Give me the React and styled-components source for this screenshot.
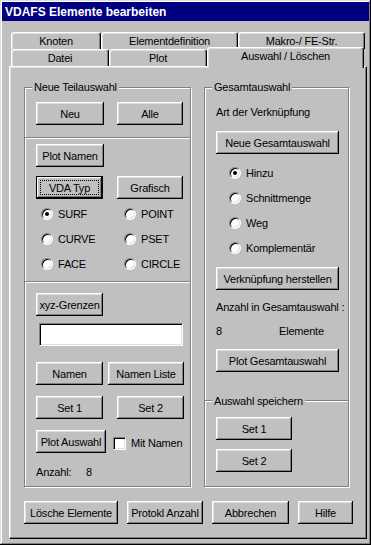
import React from "react";
import styled, { createGlobalStyle } from "styled-components";

const Global = createGlobalStyle`
  html, body {
    margin: 0;
    padding: 0;
    background: #c0c0c0;
  }
`;

const Window = styled.div`
  box-sizing: border-box;
  width: 371px;
  height: 545px;
  padding: 2px;
  background: #c0c0c0;
  box-shadow: inset -1px -1px #000, inset 1px 1px #dfdfdf,
    inset -2px -2px #808080, inset 2px 2px #fff;
  display: flex;
  flex-direction: column;
  font-family: "Liberation Sans", Arial, sans-serif;
  font-size: 11px;
  letter-spacing: -0.2px;
  color: #000;
`;

const TitleBar = styled.div`
  height: 19px;
  background: #000080;
  color: #fff;
  font-size: 12px;
  font-weight: bold;
  letter-spacing: 0;
  display: flex;
  align-items: center;
  padding-left: 3px;
`;

const Body = styled.div`
  flex: 1;
  display: flex;
  flex-direction: column;
  padding: 11px 2px 4px 7px;
`;

const TabRow = styled.div`
  display: flex;
  align-items: flex-start;
  height: 17px;
  padding-left: 2px;
`;

const Tab = styled.div`
  box-sizing: border-box;
  width: ${(p) => p.$w}px;
  height: ${(p) => (p.$active ? 21 : 17)}px;
  margin-top: ${(p) => (p.$active ? -2 : 0)}px;
  padding-bottom: ${(p) => (p.$active ? 4 : 0)}px;
  background: #c0c0c0;
  border-top: 1px solid #fff;
  border-left: 1px solid #fff;
  border-right: 1px solid #000;
  border-radius: 3px 3px 0 0;
  box-shadow: inset -1px 0 #808080, inset 1px 1px #dfdfdf;
  display: flex;
  align-items: center;
  justify-content: center;
  white-space: nowrap;
  position: ${(p) => (p.$active ? "relative" : "static")};
  z-index: ${(p) => (p.$active ? 2 : "auto")};
`;

const Panel = styled.div`
  box-sizing: border-box;
  flex: 1;
  border-top: 1px solid #fff;
  border-left: 1px solid #fff;
  border-right: 1px solid #000;
  border-bottom: 1px solid #000;
  box-shadow: inset -1px -1px #808080, inset 1px 1px #dfdfdf;
  padding: 20px 0 0 14px;
  display: flex;
  flex-direction: column;
`;

const Columns = styled.div`
  display: flex;
  gap: 13px;
`;

const GroupBox = styled.div`
  box-sizing: border-box;
  width: ${(p) => p.$w}px;
  height: 400px;
  border: 1px solid #808080;
  box-shadow: inset 1px 1px #fff, 1px 1px #fff;
  display: flex;
  flex-direction: column;
`;

const Section = styled.div`
  display: flex;
  flex-direction: column;
  align-items: flex-start;
  padding: 0 0 ${(p) => p.$pb || 0}px 11px;
`;

const Divider = styled.div`
  height: 0;
  border-top: 1px solid #808080;
  border-bottom: 1px solid #fff;
  margin-right: ${(p) => p.$mr || 0}px;
`;

const Caption = styled.div`
  margin: -7px 0 0 -4px;
  padding: 0 2px;
  height: 13px;
  line-height: 13px;
  background: #c0c0c0;
  white-space: nowrap;
  position: relative;
`;

const Label = styled.div`
  height: 13px;
  line-height: 13px;
  white-space: nowrap;
  margin-top: ${(p) => p.$mt || 0}px;
  width: ${(p) => (p.$w ? `${p.$w}px` : "auto")};
`;

const Row = styled.div`
  display: flex;
  align-items: center;
  gap: ${(p) => p.$gap || 0}px;
  margin-top: ${(p) => p.$mt || 0}px;
`;

const Button = styled.button`
  box-sizing: border-box;
  position: relative;
  width: ${(p) => p.$w}px;
  height: 23px;
  margin: ${(p) => p.$mt || 0}px 0 0 0;
  padding: 0;
  border: none;
  background: #c0c0c0;
  font: inherit;
  letter-spacing: inherit;
  color: #000;
  white-space: nowrap;
  box-shadow: ${(p) =>
    p.$default
      ? "inset 0 0 0 1px #000, inset -2px -2px #000, inset 2px 2px #fff, inset -3px -3px #808080"
      : "inset -1px -1px #000, inset 1px 1px #fff, inset -2px -2px #808080, inset 2px 2px #dfdfdf"};

  &::after {
    content: "";
    display: ${(p) => (p.$default ? "block" : "none")};
    position: absolute;
    inset: 4px;
    border: 1px dotted #000;
  }
`;

const RadioGrid = styled.div`
  display: grid;
  grid-template-columns: ${(p) => p.$cols};
  row-gap: 12px;
  margin: ${(p) => p.$mt || 0}px 0 0 ${(p) => p.$ml || 0}px;
`;

const RadioItem = styled.label`
  display: flex;
  align-items: center;
  gap: 5px;
  height: 13px;
  white-space: nowrap;
`;

const RadioCircle = styled.span`
  box-sizing: border-box;
  width: 12px;
  height: 12px;
  border-radius: 50%;
  background: #fff;
  border: 1px solid;
  border-color: #808080 #fff #fff #808080;
  box-shadow: inset 1px 1px #000, inset -1px -1px #dfdfdf;
  display: flex;
  align-items: center;
  justify-content: center;

  &::after {
    content: "";
    width: 4px;
    height: 4px;
    border-radius: 50%;
    background: ${(p) => (p.$on ? "#000" : "transparent")};
  }
`;

const CheckBox = styled.span`
  box-sizing: border-box;
  width: 13px;
  height: 13px;
  background: #fff;
  border: 1px solid;
  border-color: #808080 #fff #fff #808080;
  box-shadow: inset 1px 1px #000, inset -1px -1px #dfdfdf;
`;

const Field = styled.div`
  box-sizing: border-box;
  width: 144px;
  height: 23px;
  margin: 7px 0 0 3px;
  background: #fff;
  border: 1px solid;
  border-color: #808080 #fff #fff #808080;
  box-shadow: inset 1px 1px #000, inset -1px -1px #dfdfdf;
`;

const Footer = styled.div`
  display: flex;
  gap: 9px;
  margin-top: 14px;
`;

const Radio = ({ on, children }) => (
  <RadioItem>
    <RadioCircle $on={on} />
    {children}
  </RadioItem>
);

export default function App() {
  return (
    <>
      <Global />
      <Window>
        <TitleBar>VDAFS Elemente bearbeiten</TitleBar>
        <Body>
          <TabRow>
            <Tab $w={90}>Knoten</Tab>
            <Tab $w={137}>Elementdefinition</Tab>
            <Tab $w={127}>Makro-/ FE-Str.</Tab>
          </TabRow>
          <TabRow>
            <Tab $w={98}>Datei</Tab>
            <Tab $w={98}>Plot</Tab>
            <Tab $w={157} $active>
              Auswahl / Löschen
            </Tab>
          </TabRow>
          <Panel>
            <Columns>
              <GroupBox $w={167}>
                <Section $pb={12}>
                  <Caption>Neue Teilauswahl</Caption>
                  <Row $mt={8} $gap={13}>
                    <Button $w={68}>Neu</Button>
                    <Button $w={66}>Alle</Button>
                  </Row>
                </Section>
                <Divider />
                <Section $pb={11}>
                  <Button $w={68} $mt={5}>
                    Plot Namen
                  </Button>
                  <Row $mt={9} $gap={14}>
                    <Button $w={67} $default>
                      VDA Typ
                    </Button>
                    <Button $w={66}>Grafisch</Button>
                  </Row>
                  <RadioGrid $cols="83px 60px" $mt={8} $ml={5}>
                    <Radio on>SURF</Radio>
                    <Radio>POINT</Radio>
                    <Radio>CURVE</Radio>
                    <Radio>PSET</Radio>
                    <Radio>FACE</Radio>
                    <Radio>CIRCLE</Radio>
                  </RadioGrid>
                </Section>
                <Divider />
                <Section>
                  <Button $w={67} $mt={10}>
                    xyz-Grenzen
                  </Button>
                  <Field />
                  <Row $mt={16} $gap={5}>
                    <Button $w={67}>Namen</Button>
                    <Button $w={76}>Namen Liste</Button>
                  </Row>
                  <Row $mt={11} $gap={14}>
                    <Button $w={67}>Set 1</Button>
                    <Button $w={67}>Set 2</Button>
                  </Row>
                  <Row $mt={11}>
                    <Button $w={70}>Plot Auswahl</Button>
                    <Row $mt={3} $gap={5} style={{ marginLeft: 7 }}>
                      <CheckBox />
                      <span>Mit Namen</span>
                    </Row>
                  </Row>
                  <Row $mt={13}>
                    <Label $w={50}>Anzahl:</Label>
                    <Label>8</Label>
                  </Row>
                </Section>
              </GroupBox>

              <GroupBox $w={145}>
                <Section $pb={28}>
                  <Caption>Gesamtauswahl</Caption>
                  <Label $mt={12}>Art der Verknüpfung</Label>
                  <Button $w={123} $mt={12}>
                    Neue Gesamtauswahl
                  </Button>
                  <RadioGrid $cols="100px" $mt={12} $ml={13}>
                    <Radio on>Hinzu</Radio>
                    <Radio>Schnittmenge</Radio>
                    <Radio>Weg</Radio>
                    <Radio>Komplementär</Radio>
                  </RadioGrid>
                  <Button $w={123} $mt={13}>
                    Verknüpfung herstellen
                  </Button>
                  <Label $mt={11}>Anzahl in Gesamtauswahl :</Label>
                  <Row $mt={11}>
                    <Label $w={63}>8</Label>
                    <Label>Elemente</Label>
                  </Row>
                  <Button $w={123} $mt={11}>
                    Plot Gesamtauswahl
                  </Button>
                </Section>
                <Divider />
                <Section>
                  <Caption>Auswahl speichern</Caption>
                  <Button $w={76} $mt={9}>
                    Set 1
                  </Button>
                  <Button $w={76} $mt={9}>
                    Set 2
                  </Button>
                </Section>
              </GroupBox>
            </Columns>
            <Footer>
              <Button $w={94}>Lösche Elemente</Button>
              <Button $w={76}>Protokl Anzahl</Button>
              <Button $w={77}>Abbrechen</Button>
              <Button $w={55}>Hilfe</Button>
            </Footer>
          </Panel>
        </Body>
      </Window>
    </>
  );
}
